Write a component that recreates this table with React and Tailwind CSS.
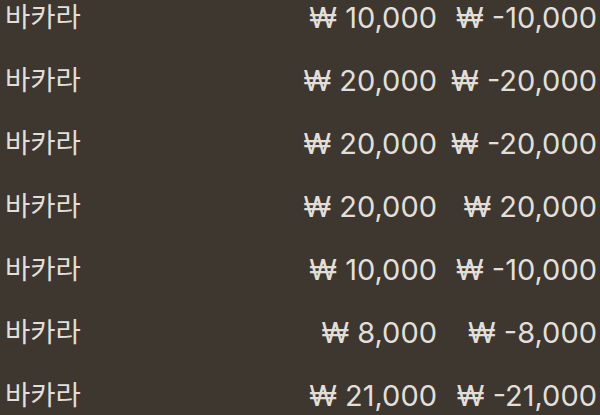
import React from "react";

const rows = [
  { name: "바카라", bet: "₩ 10,000", result: "₩ -10,000" },
  { name: "바카라", bet: "₩ 20,000", result: "₩ -20,000" },
  { name: "바카라", bet: "₩ 20,000", result: "₩ -20,000" },
  { name: "바카라", bet: "₩ 20,000", result: "₩ 20,000" },
  { name: "바카라", bet: "₩ 10,000", result: "₩ -10,000" },
  { name: "바카라", bet: "₩ 8,000", result: "₩ -8,000" },
  { name: "바카라", bet: "₩ 21,000", result: "₩ -21,000" },
];

const App = () => {
  return (
    <div
      className="w-[600px] h-[415px] overflow-hidden bg-[#3d372f] text-[#e2dfda]"
      style={{ fontFamily: 'Inter, "Noto Sans CJK KR", sans-serif' }}
    >
      <div className="flex flex-col -mt-[14px]">
        {rows.map((row, i) => (
          <div key={i} className="h-[63px] flex items-center pl-[5px] pr-[3px] text-[29px]">
            <span className="flex-1 text-[27.5px]">{row.name}</span>
            <span className="w-[160px] text-right">{row.bet}</span>
            <span className="w-[160px] text-right">{row.result}</span>
          </div>
        ))}
      </div>
    </div>
  );
};

export default App;
